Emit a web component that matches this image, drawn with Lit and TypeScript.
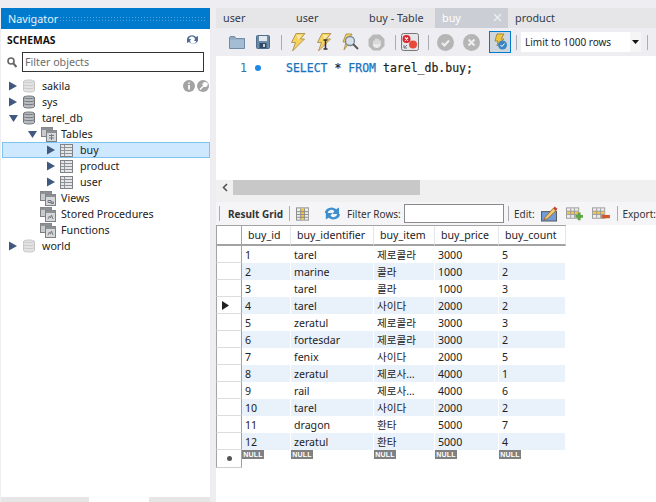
import { LitElement, html, css, svg } from "lit";
import { customElement } from "lit/decorators.js";

const arrow = (down: boolean) =>
  html`<svg class="arr" width="10" height="10" viewBox="0 0 10 10">${down
    ? svg`<path d="M0 2h9L4.500 9z" fill="#41597f"/>`
    : svg`<path d="M0 .5v9L8 5z" fill="#41597f"/>`}</svg>`;

const db = (light: boolean) => {
  const f = light ? "#e4e4e4" : "#b9bcc0";
  const s = light ? "#c9c9c9" : "#73777c";
  return html`<svg class="ic" width="14" height="14" viewBox="-1 0 14 14">
    <path d="M.5 2.500C.5.500 11.500.500 11.500 2.500v9c0 2-11 2-11 0z" fill="${f}" stroke="${s}"/>
    <path d="M.5 5.500c1 1.500 10 1.500 11 0M.5 8.500c1 1.500 10 1.500 11 0M.5 2.500c1 1.500 10 1.500 11 0" fill="none" stroke="${s}"/>
  </svg>`;
};
const folder = (inner: string) => html`<svg class="ic" width="16" height="15" viewBox="0 0 16 15">
  <rect x=".5" y=".5" width="11" height="9" fill="#c8cacc" stroke="#7d8186"/>
  <rect x=".5" y=".5" width="11" height="2.500" fill="#8d9196"/>
  <rect x="5.500" y="3.500" width="10" height="11" fill="#d5d7d9" stroke="#7d8186"/>
  <rect x="5.500" y="3.500" width="10" height="2.500" fill="#8d9196"/>
  ${svg`<path d="${inner}" fill="none" stroke="#777b80"/>`}
</svg>`;
const tableIc = () => html`<svg class="ic" width="13" height="13" viewBox="0 0 13 13">
  <rect x=".5" y=".5" width="12" height="12" fill="#e4e6e8" stroke="#7f8388"/>
  <path d="M1 3.500h11M1 6.500h11M1 9.500h11M4.500 1v11" stroke="#8f9398" fill="none"/>
</svg>`;

const tree: { t: string; pad: number; a?: "r" | "d"; k: string; gap: number; sel?: boolean; badges?: boolean }[] = [
  { t: "sakila", pad: 8, a: "r", k: "dbl", gap: 6, badges: true },
  { t: "sys", pad: 8, a: "r", k: "db", gap: 6 },
  { t: "tarel_db", pad: 8, a: "d", k: "db", gap: 6 },
  { t: "Tables", pad: 27, a: "d", k: "tables", gap: 4 },
  { t: "buy", pad: 46, a: "r", k: "table", gap: 7, sel: true },
  { t: "product", pad: 46, a: "r", k: "table", gap: 7 },
  { t: "user", pad: 46, a: "r", k: "table", gap: 7 },
  { t: "Views", pad: 39, k: "views", gap: 5 },
  { t: "Stored Procedures", pad: 39, k: "procs", gap: 5 },
  { t: "Functions", pad: 39, k: "procs", gap: 5 },
  { t: "world", pad: 8, a: "r", k: "dbl", gap: 6 },
];
const treeIcon = (k: string) => {
  if (k === "db") return db(false);
  if (k === "dbl") return db(true);
  if (k === "table") return tableIc();
  if (k === "tables") return folder("M8 8.500h5M8 11h5M10.500 7v6");
  if (k === "views") return folder("M8 9.500h3v2h-3zM11 11h2.500v1.500H11z");
  return folder("M8 12l1.500-3 1 2 1-3 1.500 4");
};

const rows: [string, string, string, string, string][] = [
  ["1", "tarel", "제로콜라", "3000", "5"],
  ["2", "marine", "콜라", "1000", "2"],
  ["3", "tarel", "콜라", "1000", "3"],
  ["4", "tarel", "사이다", "2000", "2"],
  ["5", "zeratul", "제로콜라", "3000", "3"],
  ["6", "fortesdar", "제로콜라", "3000", "2"],
  ["7", "fenix", "사이다", "2000", "5"],
  ["8", "zeratul", "제로사…", "4000", "1"],
  ["9", "rail", "제로사…", "4000", "6"],
  ["10", "tarel", "사이다", "2000", "2"],
  ["11", "dragon", "환타", "5000", "7"],
  ["12", "zeratul", "환타", "5000", "4"],
];
const cols = ["buy_id", "buy_identifier", "buy_item", "buy_price", "buy_count"];
const bolt = svg`<path d="M7 .5h9l-4.500 5.500h4L3.500 18l3-8.500H2.500z" fill="#f6d15c" stroke="#b3975a"/><path d="M8 2h5l-4 5" fill="#fbe9a8"/>`;

@customElement("app-root")
export class AppRoot extends LitElement {
  static styles = css`
    :host { display: block; width: 656px; height: 502px; overflow: hidden; background: #eeeef2; font-family: "Noto Sans", sans-serif; font-size: 10.7px; color: #1e1e1e; }
    .page { display: flex; height: 494px; padding: 8px 0 0 1px; }
    .nav { width: 209px; height: 494px; display: flex; flex-direction: column; background: #fff; }
    .nav-h { height: 21px; flex: none; background: #007acc; color: #e8f3fb; display: flex; align-items: center; padding-left: 7px; gap: 1px; font-size: 10.8px; }
    .dots { flex: 1; height: 6px; margin: 0 4px 0 0; background-image: radial-gradient(#4fa5e0 .7px, transparent .8px); background-size: 3px 3px; }
    .sch { height: 21px; flex: none; display: flex; align-items: center; justify-content: space-between; padding: 0 11px 0 6px; font-weight: 700; font-size: 10.3px; color: #111; }
    .filter { display: flex; align-items: center; height: 20px; flex: none; padding-left: 6px; gap: 5px; margin-top: 2px; }
    .filter input { box-sizing: border-box; width: 182px; height: 20px; border: 1px solid #333; padding: 0 2px; font: 10.7px "Noto Sans", sans-serif; outline: 0; background: #fff; }
    .filter input::placeholder { color: #6d6d6d; opacity: 1; }
    .tree { margin-top: 6px; flex: 1; }
    .tr { height: 16px; display: flex; align-items: center; box-sizing: border-box; position: relative; color: #222; }
    .tr.sel { background: #cde8ff; border: 1px solid #7cc4ee; margin-left: 1px; }
    .tr .arr { flex: none; margin-right: 3px; width: 10px; }
    .tr .ic { flex: none; }
    .badges { margin-left: auto; margin-right: 1px; display: flex; gap: 2px; }
    .navtabs { height: 5px; flex: none; display: flex; background: #e6e6e6; }
    .navtabs i { display: block; width: 60px; margin-left: 88px; background: #fff; }
    .main { flex: 1; margin-left: 6px; display: flex; flex-direction: column; min-width: 0; }
    .tabs { height: 20px; flex: none; display: flex; background: #e6e6e8; }
    .tab { width: 73px; box-sizing: border-box; padding: 0 0 2px 7px; display: flex; align-items: center; color: #333a4a; font-size: 10.8px; }
    .tab.on { background: #ccced6; color: #fff; justify-content: space-between; padding-right: 6px; }
    .tb { height: 28px; flex: none; display: flex; align-items: center; gap: 6px; padding-left: 11px; background: #eeeef2; border-radius: 4px 0 0 0; overflow: hidden; }
    .btn { width: 20px; height: 20px; flex: none; display: flex; align-items: center; justify-content: center; }
    .sep { width: 1px; height: 15px; background: #a9adb3; flex: none; }
    .sep1 { margin-left: 2px; }
    .sep2 { margin-left: 3px; margin-right: -2px; }
    .ml2 { margin-left: 2px; }
    .ml-2 { margin-left: -2px; }
    .ml-1 { margin-left: -1px; }
    .toggle { width: 22px; height: 22px; box-sizing: border-box; border: 1px solid #007acc; background: #cfd6de; }
    .limit { width: 120px; height: 20px; box-sizing: border-box; flex: none; background: #fff; padding-left: 4px; display: flex; align-items: center; justify-content: space-between; color: #1e1e1e; font-size: 10px; }
    .limit b { width: 11px; height: 20px; background: #f5f5f5; display: flex; align-items: center; justify-content: center; }
    .editor { height: 124px; flex: none; background: #fff; font: 11.5px "DejaVu Sans Mono", monospace; display: flex; align-items: flex-start; padding-top: 5px; box-sizing: border-box; }
    .ln { width: 31px; text-align: right; color: #3a6ea5; flex: none; line-height: 14px; }
    .dot { width: 6px; height: 6px; border-radius: 50%; background: #1e8ae6; margin: 4px 25px 0 8px; flex: none; }
    .code { line-height: 14px; color: #222; -webkit-text-stroke: .2px #222; }
    .code b { font-weight: 400; color: #1a73c0; -webkit-text-stroke: .25px #1a73c0; }
    .hs { height: 15px; flex: none; background: #f0f0f0; display: flex; align-items: center; }
    .hs span { width: 17px; flex: none; text-align: center; }
    .hs i { display: block; width: 187px; height: 15px; background: #c8c8c8; }
    .gap { height: 7px; flex: none; background: #f0f0f0; }
    .rt { height: 23px; flex: none; display: flex; align-items: center; background: #f5f5f7; font-size: 10px; color: #333; }
    .rt .sep { height: 15px; }
    .rg { font-weight: 700; margin: 0 6px 0 8px; width: 55px; white-space: nowrap; color: #333; }
    .fi { width: 100px; height: 19px; box-sizing: border-box; background: #fff; border: 1px solid #8a8a8a; margin: 0 4px 0 4px; flex: none; }
    .grid { flex: 1; background: #fff; font-size: 10.6px; }
    .grow { display: flex; height: 17px; }
    .head { height: 21px; border-top: 1px solid #a3a3a3; box-sizing: border-box; width: 350px; }
    .head .g { border-bottom: 2px solid #a3a3a3; }
    .head .c { border-bottom: 2px solid #a3a3a3; padding-left: 6px; border-right: 1px solid #e6e6e6; color: #222; }
    .g { width: 26px; box-sizing: border-box; flex: none; border-left: 1px solid #a3a3a3; border-right: 1px solid #a3a3a3; border-bottom: 1px solid #dcdcdc; display: flex; align-items: center; justify-content: center; }
    .rowmark { margin-right: 8px; }
    .c { box-sizing: border-box; flex: none; display: flex; align-items: center; padding-left: 3px; white-space: nowrap; font-family: "Noto Sans", "Noto Sans CJK KR", sans-serif; color: #222; border-right: 1px solid #fff; }
    .alt .c { background: #e9f1fb; }
    .c0 { width: 49px; } .c1 { width: 83px; } .c2 { width: 61px; } .c3 { width: 64px; } .c4 { width: 67px; }
    .nullb { background: #808080; color: #fff; font: 700 7px "Liberation Sans", sans-serif; width: 22px; height: 9px; line-height: 9px; text-align: center; letter-spacing: .2px; }
    .c.nullc { align-items: flex-start; padding-left: 0; }
    .nr { height: 18px; }
    .nr .g { border-bottom: 1px solid #cfcfcf; }
    .star { width: 5px; height: 5px; border-radius: 50%; background: #555; }
    .ed { margin-left: 5px; width: 22px; }
    .i-edit { margin-left: 6px; }
    .i-add, .i-del { margin-left: 8px; }
    .sep-x { margin-left: 7px; }
    .export { margin-left: 5px; white-space: nowrap; }
  `;

  render() {
    return html`<div class="page">
      <div class="nav">
        <div class="nav-h">Navigator<span class="dots"></span></div>
        <div class="sch"><span>SCHEMAS</span>
          <svg width="13" height="11" viewBox="0 0 13 11"><path d="M1 5a5 4 0 0 1 9-2l2-1v5H8l1-2a3 3 0 0 0-6 1zM12 6a5 4 0 0 1-9 2l-2 1V5h4L4 7a3 3 0 0 0 6-1z" fill="#4f6f92"/></svg>
        </div>
        <div class="filter">
          <svg width="10" height="11" viewBox="0 0 10 11"><circle cx="4" cy="4" r="3" fill="none" stroke="#666" stroke-width="1.600"/><path d="M6 6l3.500 4" stroke="#666" stroke-width="2"/></svg>
          <input placeholder="Filter objects" />
        </div>
        <div class="tree">
          ${tree.map(
            (r) => html`<div class="tr ${r.sel ? "sel" : ""}" style="padding-left:${r.sel ? r.pad - 2 : r.pad}px">
              ${r.a ? arrow(r.a === "d") : ""}${treeIcon(r.k)}
              <span style="margin-left:${r.gap}px">${r.t}</span>
              ${r.badges
                ? html`<span class="badges">
                    <svg width="12" height="12" viewBox="0 0 12 12"><circle cx="6" cy="6" r="6" fill="#a3a3a3"/><path d="M6 2.500v1.300M6 5v4.500" stroke="#fff" stroke-width="1.800"/></svg>
                    <svg width="12" height="12" viewBox="0 0 12 12"><circle cx="6" cy="6" r="6" fill="#a3a3a3"/><path d="M3 9.500l4-4M6 5a2 2 0 0 1 3-2L8 4.500l1 .8 1-1a2 2 0 0 1-3 1.700" stroke="#fff" stroke-width="1.500" fill="#fff"/></svg>
                  </span>`
                : ""}
            </div>`
          )}
        </div>
        <div class="navtabs"><i></i></div>
      </div>
      <div class="main">
        <div class="tabs">
          <div class="tab">user</div><div class="tab">user</div><div class="tab">buy - Table</div>
          <div class="tab on">buy<svg width="9" height="9" viewBox="0 0 9 9"><path d="M1 1l7 7M8 1l-7 7" stroke="#eef0f4" stroke-width="1.100"/></svg></div>
          <div class="tab">product</div>
        </div>
        <div class="tb">
          <span class="btn"><svg width="16" height="13" viewBox="0 0 16 13"><path d="M.5 12.500V1.500C.5 1 1 .5 1.500 .5h4l1.500 2h8.500v10z" fill="#8fa9c2" stroke="#6f8ba6"/><rect x="1" y="3.500" width="14" height="8.500" fill="#a4bdd4"/></svg></span>
          <span class="btn"><svg width="14" height="14" viewBox="0 0 14 14"><rect x=".5" y=".5" width="13" height="13" rx="1" fill="#6b8aa8" stroke="#4f6d8b"/><rect x="3" y="1" width="8" height="5" fill="#e2e8ee"/><rect x="3.500" y="8" width="7" height="5" fill="#2f4a66"/><rect x="7" y="9" width="2" height="3" fill="#c9d3dc"/></svg></span>
          <span class="sep sep1"></span>
          <span class="btn"><svg width="18" height="18" viewBox="0 0 18 18">${bolt}</svg></span>
          <span class="btn"><svg width="18" height="18" viewBox="0 0 18 18">${bolt}<path d="M8.500 7h4M10.500 7v9M8.500 16h4" stroke="#333" stroke-width="1.500" fill="none"/></svg></span>
          <span class="btn"><svg width="18" height="18" viewBox="0 0 18 18"><path d="M5 1h6l-3 5h3L3 17l2-8H2z" fill="#f4d063" stroke="#b3975a"/><circle cx="9" cy="8" r="4.500" fill="#d5e0ea" stroke="#7d8790" stroke-width="1.300"/><path d="M12 11l5 5" stroke="#555" stroke-width="1.800"/></svg></span>
          <span class="btn"><svg width="17" height="17" viewBox="0 0 17 17"><path d="M5 .5h7l4.500 4.500v7L12 16.500H5L.5 12V5z" fill="#b9b9b9"/><path d="M6 11V6.500M8 10.500V4.500M10 10.500V5M12 11V6.500M5.500 11c1 3 6 3 6.500 0z" stroke="#ececec" stroke-width="1.300" fill="#ececec"/></svg></span>
          <span class="sep sep2"></span>
          <span class="btn"><svg width="18" height="18" viewBox="0 0 18 18"><rect x=".5" y=".5" width="17" height="17" rx="2" fill="#e4e6ea" stroke="#777"/><path d="M3 12v3h3M3 15l3-3" stroke="#777" fill="none"/><circle cx="5.500" cy="6" r="4" fill="#d8262c"/><circle cx="12" cy="11.500" r="4" fill="#e84a3a"/><path d="M4 4.500l3 3M7 4.500l-3 3" stroke="#fff" stroke-width="1.200"/></svg></span>
          <span class="sep sep1"></span>
          <span class="btn"><svg width="17" height="17" viewBox="0 0 17 17"><circle cx="8.500" cy="8.500" r="8.500" fill="#b5b5b5"/><path d="M5 9l2.500 2.500L12 6.500" fill="none" stroke="#efefef" stroke-width="2"/></svg></span>
          <span class="btn"><svg width="17" height="17" viewBox="0 0 17 17"><circle cx="8.500" cy="8.500" r="8.500" fill="#b5b5b5"/><path d="M5.500 5.500l6 6M11.500 5.500l-6 6" stroke="#efefef" stroke-width="2"/></svg></span>
          <span class="btn toggle ml2"><svg width="18" height="18" viewBox="0 0 18 18"><path d="M6 1h7l-3 5h3L6 13l1-5H4z" fill="#f0c63f" stroke="#a88a3a"/><circle cx="11.500" cy="12" r="4.500" fill="#3d86c6"/><path d="M9.500 12l1.500 1.500 2.500-3" fill="none" stroke="#fff"/></svg></span>
          <span class="sep ml-1"></span>
          <span class="limit ml-2">Limit to 1000 rows<b><svg width="7" height="4" viewBox="0 0 7 4"><path d="M0 0h7L3.500 4z" fill="#111"/></svg></b></span>
          <span class="sep"></span>
          <span class="btn"><svg width="18" height="18" viewBox="0 0 18 18">${bolt}</svg></span>
        </div>
        <div class="editor"><span class="ln">1</span><span class="dot"></span><span class="code"><b>SELECT</b> * <b>FROM</b> tarel_db.buy;</span></div>
        <div class="hs"><span><svg width="6" height="9" viewBox="0 0 6 9"><path d="M5 1L1.500 4.500 5 8" fill="none" stroke="#555" stroke-width="1.600"/></svg></span><i></i></div>
        <div class="gap"></div>
        <div class="rt">
          <span class="sep" style="margin-left:3px"></span>
          <span class="rg">Result Grid</span>
          <span class="sep"></span>
          <svg style="margin-left:6px" width="14" height="14" viewBox="0 0 14 14"><rect x=".5" y=".5" width="13" height="13" fill="#eee" stroke="#8b8b8b"/><rect x="5" y="1" width="4" height="12" fill="#f5c941"/><path d="M1 4.500h12M1 7.500h12M1 10.500h12M5 1v12M9 1v12" stroke="#8b8b8b" fill="none"/></svg>
          <svg style="margin-left:14px" width="20" height="15" viewBox="0 0 20 15"><path d="M2 7a7 6 0 0 1 12-4l3-2v7h-7l2-3a4 4 0 0 0-7 2z" fill="#3f8fcf"/><path d="M18 8a7 6 0 0 1-12 4l-3 2V7h7l-2 3a4 4 0 0 0 7-2z" fill="#3f8fcf"/></svg>
          <span style="margin-left:5px;width:53px;white-space:nowrap">Filter Rows:</span>
          <span class="fi"></span>
          <span class="sep"></span>
          <span class="ed">Edit:</span>
          <svg class="i-edit" width="18" height="17" viewBox="0 0 18 17"><rect x=".5" y="6.500" width="16" height="10" fill="#6f9bd8" stroke="#555"/><path d="M4 13L13 3l3 2.500-9 8.500-4 1z" fill="#f2c879" stroke="#a06a20"/><path d="M13 3l1.500-2 3 2.500-1.500 2z" fill="#c8433a"/></svg>
          <svg class="i-add" width="19" height="14" viewBox="0 0 19 14"><rect x=".5" y=".5" width="13" height="11" fill="#eee" stroke="#9a9a9a"/><rect x="1" y="4" width="12" height="3" fill="#f1c84b"/><path d="M1 4h12M1 7.500h12M5 1v10M9 1v10" stroke="#9a9a9a" fill="none"/><path d="M14 5.500v8M10 9.500h8" stroke="#5da442" stroke-width="3"/></svg>
          <svg class="i-del" width="19" height="14" viewBox="0 0 19 14"><rect x=".5" y=".5" width="13" height="11" fill="#eee" stroke="#9a9a9a"/><rect x="1" y="4" width="12" height="3" fill="#f1c84b"/><path d="M1 4h12M1 7.500h12M5 1v10M9 1v10" stroke="#9a9a9a" fill="none"/><rect x="10" y="8" width="9" height="3.500" fill="#d0592c"/></svg>
          <span class="sep sep-x"></span>
          <span class="export">Export:</span>
        </div>
        <div class="grid">
          <div class="grow head"><div class="g"></div>${cols.map((c, i) => html`<div class="c c${i}">${c}</div>`)}</div>
          ${rows.map(
            (r, i) => html`<div class="grow ${i % 2 ? "alt" : ""}">
              <div class="g">${i === 3 ? html`<svg class="rowmark" width="7" height="9" viewBox="0 0 7 9"><path d="M0 0l7 4.500L0 9z" fill="#222"/></svg>` : ""}</div>
              ${r.map((v, j) => html`<div class="c c${j}">${v}</div>`)}
            </div>`
          )}
          <div class="grow nr"><div class="g"><span class="star"></span></div>${cols.map((_, i) => html`<div class="c c${i} nullc"><span class="nullb">NULL</span></div>`)}</div>
        </div>
      </div>
    </div>`;
  }
}
